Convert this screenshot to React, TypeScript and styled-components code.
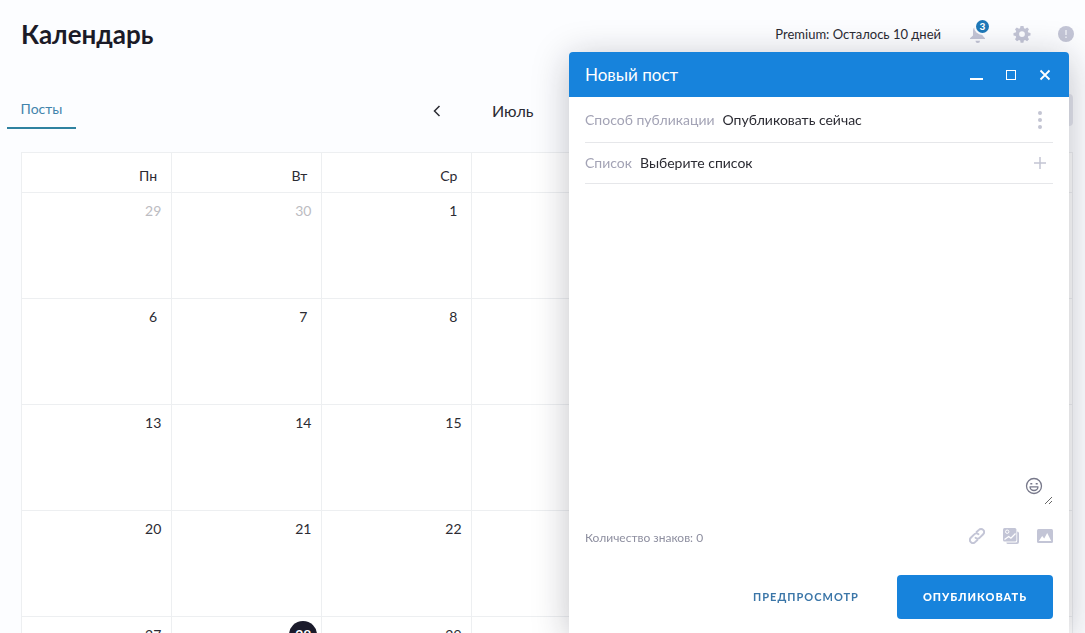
import React from "react";
import styled, { createGlobalStyle, css } from "styled-components";

const GlobalStyle = createGlobalStyle`
  *, *::before, *::after { box-sizing: border-box; }
  body { margin: 0; background: #fcfdff; }
  body, button, select, textarea { font-family: Lato, "Open Sans", sans-serif; color: #2b2b33; }
  button { border: 0; padding: 0; background: none; cursor: pointer; }
`;

const Page = styled.div`
  height: 100vh;
  overflow: hidden;
  padding: 0 12px 0 21px;
`;

const TopBar = styled.header`
  display: flex;
  align-items: center;
  justify-content: space-between;
  height: 68px;
`;

const Title = styled.h1`
  margin: 0;
  font-size: 26px;
  line-height: 32px;
  font-weight: 700;
  color: #1b1b27;
`;

const Account = styled.div`
  display: flex;
  align-items: center;
  margin-right: -10px;
`;

const Plan = styled.span`
  margin-right: 20px;
  font-size: 13px;
  line-height: 20px;
`;

const TopButton = styled.button`
  position: relative;
  display: grid;
  place-items: center;
  width: 34px;
  height: 24px;
  color: #c3c5d6;
  & + & { margin-left: 10px; }
`;

const Badge = styled.span`
  position: absolute;
  top: -2px;
  right: 6px;
  width: 13px;
  height: 13px;
  border-radius: 50%;
  background: #1f78b8;
  box-shadow: 0 0 0 2px #fcfdff;
  color: #fff;
  font-size: 10px;
  line-height: 13px;
  font-weight: 900;
  text-align: center;
`;

const Toolbar = styled.div`
  display: flex;
  align-items: center;
  height: 84px;
`;

const Tab = styled.button`
  width: 69px;
  height: 38px;
  margin-left: -14px;
  border-bottom: 2px solid #2f82a0;
  color: #4284ac;
  font-size: 14px;
  line-height: 20px;
`;

const MonthNav = styled.div`
  display: flex;
  flex: 1;
  align-items: center;
  padding: 2px 0 0 350px;
  gap: 44px;
`;

const Arrow = styled.button`
  display: grid;
  place-items: center;
  width: 22px;
  height: 24px;
`;

const Month = styled.span`
  font-size: 16px;
  line-height: 24px;
`;

const ViewButton = styled.button`
  width: 96px;
  height: 32px;
  border-radius: 4px;
  background: #e4e6ee;
`;

const Calendar = styled.table`
  width: 100%;
  table-layout: fixed;
  border-collapse: collapse;
  background: #fff;
`;

const Weekday = styled.th`
  height: 40px;
  padding: 6px 14px 0 0;
  border: 1px solid #edeff1;
  font-size: 14px;
  line-height: 20px;
  font-weight: 400;
  text-align: right;
`;

const Day = styled.td`
  height: 106px;
  padding: 4px 4px 0 0;
  border: 1px solid #edeff1;
  vertical-align: top;
`;

const DayNumber = styled.span<{ $muted?: boolean; $today?: boolean }>`
  display: block;
  width: 28px;
  height: 28px;
  margin-left: auto;
  border-radius: 50%;
  font-size: 14px;
  line-height: 28px;
  text-align: center;
  ${(p) => p.$muted && css`color: #bcbcc2;`}
  ${(p) => p.$today && css`background: #1b1b2b; color: #fff; font-weight: 700;`}
`;

const Dialog = styled.form`
  position: fixed;
  top: 52px;
  right: 16px;
  bottom: 0;
  display: flex;
  flex-direction: column;
  width: 500px;
  max-width: calc(100% - 32px);
  border-radius: 4px 4px 0 0;
  background: #fff;
  box-shadow: 0 6px 36px rgba(20, 20, 40, 0.26);
`;

const DialogHeader = styled.div`
  display: flex;
  align-items: center;
  justify-content: space-between;
  height: 45px;
  padding: 0 14px 0 16px;
  border-radius: 4px 4px 0 0;
  background: #1783dc;
`;

const DialogTitle = styled.h2`
  margin: 0;
  color: #fff;
  font-size: 17px;
  line-height: 24px;
  font-weight: 400;
`;

const WindowButtons = styled.div`
  display: flex;
  gap: 14px;
`;

const WindowButton = styled.button`
  display: grid;
  place-items: center;
  width: 20px;
  height: 20px;
  color: #fff;
`;

const DialogBody = styled.div`
  display: flex;
  flex: 1;
  flex-direction: column;
  padding: 0 16px 14px;
`;

const Field = styled.div<{ $tall?: boolean }>`
  display: flex;
  align-items: center;
  gap: 8px;
  height: ${(p) => (p.$tall ? 46 : 41)}px;
  border-bottom: 1px solid #e6e7ea;
  font-size: 14px;
  line-height: 20px;
`;

const FieldLabel = styled.label`
  color: #a3a3b5;
`;

const Choice = styled.select`
  appearance: none;
  border: 0;
  padding: 0;
  background: none;
  font-size: 14px;
  line-height: 20px;
`;

const FieldButton = styled.button`
  display: grid;
  place-items: center;
  width: 26px;
  height: 26px;
  margin-left: auto;
  color: #c3c5d3;
`;

const Editor = styled.div`
  position: relative;
  display: flex;
  flex: 1;
`;

const PostText = styled.textarea`
  flex: 1;
  padding: 16px 40px 16px 0;
  border: 0;
  outline: 0;
  background: none;
  font-size: 14px;
  line-height: 20px;
`;

const EmojiButton = styled.button`
  position: absolute;
  right: 10px;
  bottom: 10px;
  width: 18px;
  height: 18px;
  color: #77788a;
`;

const Attachments = styled.div`
  display: flex;
  align-items: center;
  justify-content: space-between;
  height: 70px;
  padding-bottom: 8px;
`;

const Counter = styled.span`
  padding-top: 4px;
  color: #8e8fa0;
  font-size: 12px;
  line-height: 16px;
`;

const IconRow = styled.div`
  display: flex;
  gap: 18px;
`;

const IconButton = styled.button`
  display: grid;
  place-items: center;
  width: 16px;
  height: 16px;
  color: #c3c5d6;
`;

const Actions = styled.div`
  display: flex;
  justify-content: flex-end;
  gap: 12px;
`;

const ActionButton = styled.button<{ $primary?: boolean }>`
  height: 44px;
  padding: 0 26px;
  border-radius: 4px;
  font-size: 11px;
  line-height: 16px;
  font-weight: ${(p) => (p.$primary ? 900 : 700)};
  letter-spacing: 1px;
  color: ${(p) => (p.$primary ? "#fff" : "#3b76a8")};
  background: ${(p) => (p.$primary ? "#1783dc" : "none")};
`;

const BellIcon = () => (
  <svg width="18" height="20" viewBox="0 0 18 20" fill="currentColor">
    <path d="M9 1.500C5.500 2 4 4.500 4 7v4.500L1 14.300V15h15v-.7L13.500 11.500V7c0-2.500-1.500-5-4.500-5.500z" />
    <path d="M6.500 16.800h4.500a2.250 2.250 0 0 1-4.500 0z" />
  </svg>
);

const GearIcon = () => (
  <svg width="18" height="18" viewBox="0 0 18 18" fill="currentColor">
    <path
      fillRule="evenodd"
      d="M7.500 1h3l.5 2.200 1.200.5L14.200 2.500l1.800 1.800-1.200 2 .5 1.200 2.200.5v2.500l-2.200.6-.5 1.200 1.200 2-1.900 1.900-2-1.200-1.200.5-.5 2.200h-2.800L7.200 15.500 6 15l-2 1.200-2-1.900 1.200-2-.5-1.200L.5 10.500V8l2.200-.5.5-1.200L2 4.300l1.800-1.800L6 3.700l1-.5zM9 6.200a2.900 2.900 0 1 0 0 5.800A2.900 2.900 0 0 0 9 6.200z"
    />
  </svg>
);

const AlertIcon = () => (
  <svg width="16" height="16" viewBox="0 0 16 16">
    <circle cx="8" cy="8" r="8" fill="currentColor" />
    <path d="M8 4v5M8 10.500v1.500" stroke="#fcfdff" strokeWidth="1.500" opacity=".75" />
  </svg>
);

const LinkIcon = () => (
  <svg width="16" height="16" viewBox="1 1 22 22" fill="none" stroke="currentColor" strokeWidth="2.700" strokeLinecap="round">
    <path d="M10 14.500a4 4 0 0 0 5.800-.3l4.700-4.700a4.100 4.100 0 0 0-5.900-5.900L11.500 6.500" />
    <path d="M14 9.500a4 4 0 0 0-5.800.3l-4.700 4.700a4.100 4.100 0 0 0 5.900 5.900l3.100-2.900" />
  </svg>
);

const GalleryIcon = () => (
  <svg width="16" height="16" viewBox="0 0 16 16">
    <path d="M14.200 3.500A1.800 1.800 0 0 1 16 5.200V14a2 2 0 0 1-2 2H5a1.800 1.800 0 0 1-1.700-1.600h9.400a1.500 1.500 0 0 0 1.500-1.500z" fill="currentColor" />
    <rect width="13.400" height="13.400" rx="1.500" fill="currentColor" />
    <circle cx="4.200" cy="3.700" r="1.700" fill="none" stroke="#fff" />
    <path d="M1.500 11.500l4.200-3 2.200 1.700 4.600-4.700" fill="none" stroke="#fff" strokeWidth="1.300" />
  </svg>
);

const ImageIcon = () => (
  <svg width="16" height="14" viewBox="0 0 16 14">
    <rect width="16" height="14" rx="1.500" fill="currentColor" />
    <path d="M1.800 12l3.400-5 2 2.500L10.200 4l4 8z" fill="#fff" />
  </svg>
);

const SmileIcon = () => (
  <svg width="18" height="18" viewBox="0 0 18 18" fill="none" stroke="currentColor">
    <circle cx="9" cy="9" r="7.500" strokeWidth="1.300" />
    <path d="M5 9.800h8a4 3.700 0 0 1-8 0z" strokeWidth="1.300" strokeLinejoin="round" />
    <path d="M5.300 6.700h2M10.700 6.700h2" strokeWidth="1.500" />
  </svg>
);

const weekdays = ["Пн", "Вт", "Ср", "", "", "", ""];
const weeks = [
  [29, 30, 1],
  [6, 7, 8],
  [13, 14, 15],
  [20, 21, 22],
  [27, 28, 29],
];

export default function App() {
  return (
    <>
      <GlobalStyle />
      <Page>
        <TopBar>
          <Title>Календарь</Title>
          <Account>
            <Plan>Premium: Осталось 10 дней</Plan>
            <TopButton type="button" aria-label="Уведомления">
              <BellIcon />
              <Badge>3</Badge>
            </TopButton>
            <TopButton type="button" aria-label="Настройки">
              <GearIcon />
            </TopButton>
            <TopButton type="button" aria-label="Помощь">
              <AlertIcon />
            </TopButton>
          </Account>
        </TopBar>

        <Toolbar>
          <Tab type="button">Посты</Tab>
          <MonthNav>
            <Arrow type="button" aria-label="Предыдущий месяц">
              <svg width="8" height="12" viewBox="0 0 8 12" fill="none" stroke="currentColor" strokeWidth="1.500">
                <path d="M6.500 1L1.500 6l5 5" />
              </svg>
            </Arrow>
            <Month>Июль</Month>
          </MonthNav>
          <ViewButton type="button" aria-label="Вид календаря" />
        </Toolbar>

        <Calendar>
          <thead>
            <tr>
              {weekdays.map((name, i) => (
                <Weekday key={i} scope="col">{name}</Weekday>
              ))}
            </tr>
          </thead>
          <tbody>
            {weeks.map((days, week) => (
              <tr key={week}>
                {weekdays.map((_, i) => (
                  <Day key={i}>
                    {days[i] && (
                      <DayNumber $muted={week === 0 && days[i] > 20} $today={days[i] === 28}>
                        {days[i]}
                      </DayNumber>
                    )}
                  </Day>
                ))}
              </tr>
            ))}
          </tbody>
        </Calendar>
      </Page>

      <Dialog>
        <DialogHeader>
          <DialogTitle>Новый пост</DialogTitle>
          <WindowButtons>
            <WindowButton type="button" aria-label="Свернуть">
              <svg width="14" height="14" viewBox="0 0 14 14"><path d="M0 11h13" stroke="currentColor" strokeWidth="2" /></svg>
            </WindowButton>
            <WindowButton type="button" aria-label="Развернуть">
              <svg width="10" height="10" viewBox="0 0 10 10"><rect x=".5" y=".5" width="9" height="9" fill="none" stroke="currentColor" /></svg>
            </WindowButton>
            <WindowButton type="button" aria-label="Закрыть">
              <svg width="12" height="12" viewBox="0 0 12 12"><path d="M1.500 1.500l9 9M10.500 1.500l-9 9" stroke="currentColor" strokeWidth="1.800" /></svg>
            </WindowButton>
          </WindowButtons>
        </DialogHeader>

        <DialogBody>
          <Field $tall>
            <FieldLabel htmlFor="mode">Способ публикации</FieldLabel>
            <Choice id="mode">
              <option>Опубликовать сейчас</option>
            </Choice>
            <FieldButton type="button" aria-label="Ещё">
              <svg width="4" height="20" viewBox="0 0 4 20" fill="currentColor">
                <circle cx="2" cy="3" r="2" /><circle cx="2" cy="10" r="2" /><circle cx="2" cy="17" r="2" />
              </svg>
            </FieldButton>
          </Field>
          <Field>
            <FieldLabel htmlFor="list">Список</FieldLabel>
            <Choice id="list">
              <option>Выберите список</option>
            </Choice>
            <FieldButton type="button" aria-label="Добавить список">
              <svg width="12" height="12" viewBox="0 0 12 12"><path d="M6 0v12M0 6h12" stroke="currentColor" strokeWidth="1.500" /></svg>
            </FieldButton>
          </Field>

          <Editor>
            <PostText aria-label="Текст поста" />
            <EmojiButton type="button" aria-label="Эмодзи">
              <SmileIcon />
            </EmojiButton>
          </Editor>

          <Attachments>
            <Counter>Количество знаков: 0</Counter>
            <IconRow>
              <IconButton type="button" aria-label="Ссылка"><LinkIcon /></IconButton>
              <IconButton type="button" aria-label="Галерея"><GalleryIcon /></IconButton>
              <IconButton type="button" aria-label="Изображение"><ImageIcon /></IconButton>
            </IconRow>
          </Attachments>

          <Actions>
            <ActionButton type="button">ПРЕДПРОСМОТР</ActionButton>
            <ActionButton type="submit" $primary>ОПУБЛИКОВАТЬ</ActionButton>
          </Actions>
        </DialogBody>
      </Dialog>
    </>
  );
}
